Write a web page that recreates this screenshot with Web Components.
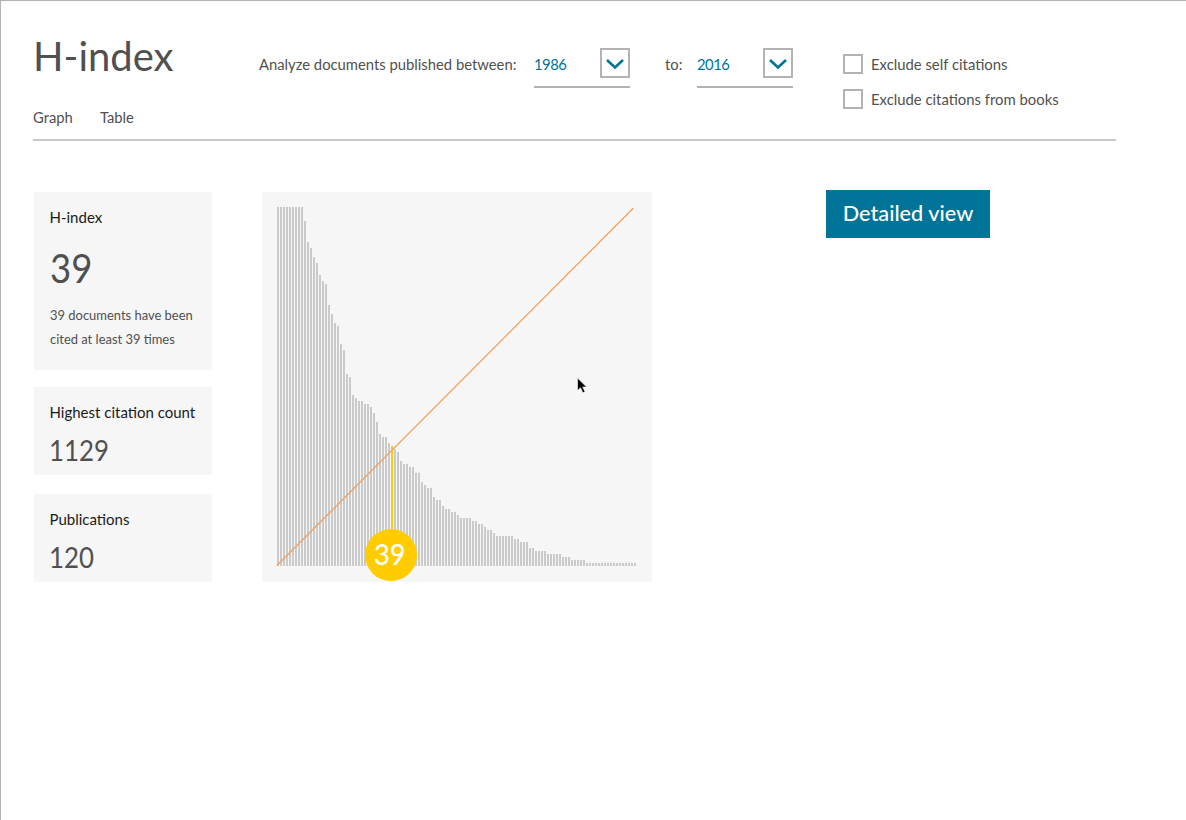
<!DOCTYPE html>
<html lang="en"><head><meta charset="utf-8"><title>H-index</title>
<style>html,body{margin:0;padding:0;background:#fff}</style></head>
<body>
<hindex-page>
  <page-header>
    <span slot="title">H-index</span>
    <tab-link slot="tabs">Graph</tab-link>
    <tab-link slot="tabs">Table</tab-link>
    <span slot="range-label">Analyze documents published between:</span>
    <year-select slot="from" value="1986"></year-select>
    <span slot="to-label">to:</span>
    <year-select slot="to" value="2016"></year-select>
    <check-option slot="checks">Exclude self citations</check-option>
    <check-option slot="checks">Exclude citations from books</check-option>
  </page-header>
  <page-main>
    <stat-card slot="cards" class="first" label="H-index" value="39" big>39 documents have been<br>cited at least 39 times</stat-card>
    <stat-card slot="cards" class="second" label="Highest citation count" value="1129"></stat-card>
    <stat-card slot="cards" class="third" label="Publications" value="120"></stat-card>
    <hindex-chart slot="chart"></hindex-chart>
    <detail-button slot="action">Detailed view</detail-button>
  </page-main>
  <mouse-cursor></mouse-cursor>
</hindex-page>
<script>
const FONT='"Lato","Noto Sans",sans-serif';
function def(name,html){
  customElements.define(name,class extends HTMLElement{
    constructor(){super();const r=this.attachShadow({mode:'open'});r.innerHTML=typeof html==='function'?html(this):html;}
  });
}
def('hindex-page',`<style>
:host{display:block;position:relative;box-sizing:border-box;width:1186px;height:820px;overflow:hidden;
border-left:1px solid #b3b3b3;border-top:1px solid #b3b3b3;padding-left:32px;background:#fff;font-family:${FONT};color:#505050}
</style><slot></slot>`);
def('page-header',`<style>
:host{display:flex;box-sizing:border-box;width:1083px;height:140px;border-bottom:2px solid #c9c9c9}
.left{width:226px;flex:none}
.title{font-size:40px;line-height:48px;margin-top:31px;color:#505050}
.tabs{display:flex;gap:27px;margin-top:27px}
.range{display:flex;align-items:flex-start;margin-top:47px;font-size:14.8px;line-height:32px;height:40px}
.lbl{width:275px;flex:none;white-space:nowrap}
.tol{width:32px;flex:none;margin-left:35px}
.checks{margin-left:50px;margin-top:53px;display:flex;flex-direction:column;gap:15px}
</style>
<div class="left"><div class="title"><slot name="title"></slot></div><div class="tabs"><slot name="tabs"></slot></div></div>
<div class="range"><span class="lbl"><slot name="range-label"></slot></span><slot name="from"></slot><span class="tol"><slot name="to-label"></slot></span><slot name="to"></slot></div>
<div class="checks"><slot name="checks"></slot></div>`);
def('tab-link',`<style>:host{display:block;font-size:14.8px;line-height:20px;color:#505050}</style><slot></slot>`);
def('year-select',el=>`<style>
:host{display:flex;box-sizing:border-box;width:96px;height:40px;border-bottom:2px solid #b3b3b3;justify-content:space-between;font-size:14.8px;line-height:32px;color:#007398}
.y{letter-spacing:-.5px}
.box{box-sizing:border-box;width:30px;height:30px;border:2px solid #b3b3b3;display:flex;align-items:center;justify-content:center}
</style><span class="y">${el.getAttribute('value')}</span><span class="box"><svg width="20" height="16" viewBox="0 0 20 16"><path d="M2 5 L10 12.5 L18 5" fill="none" stroke="#007398" stroke-width="2.6"/></svg></span>`);
def('check-option',`<style>
:host{display:flex;align-items:center;gap:8px;height:20px;font-size:14.85px;color:#505050;white-space:nowrap}
.b{box-sizing:border-box;width:20px;height:20px;border:2px solid #b3b3b3;flex:none}
</style><span class="b"></span><span><slot></slot></span>`);
def('page-main',`<style>
:host{display:flex;align-items:flex-start;margin-top:51px;margin-left:1px}
.cards{width:178px;flex:none}
.chart{margin-left:50px;flex:none;height:390px}
.action{margin-left:174px;margin-top:-2px;flex:none}
</style><div class="cards"><slot name="cards"></slot></div><div class="chart"><slot name="chart"></slot></div><div class="action"><slot name="action"></slot></div>`);
def('stat-card',el=>{
  const big=el.hasAttribute('big');
  return `<style>
:host{display:block;box-sizing:border-box;background:#f6f6f6;padding:15px 0 0 15.5px;height:${big?178:88}px;color:#505050}
:host(.second){margin-top:17px}
:host(.third){margin-top:19px}
.l{font-size:15px;line-height:20px;color:#1a1a1a;white-space:nowrap}
.v{font-size:${big?41:29}px;line-height:${big?48:36}px;margin-top:${big?17:10}px;margin-left:${big?0:-.5}px;color:#505050;transform:scaleX(.89);transform-origin:0 50%}
.n{font-size:12.95px;line-height:24px;margin-top:11px;margin-left:.5px}
</style><div class="l">${el.getAttribute('label')}</div><div class="v">${el.getAttribute('value')}</div>${big?'<div class="n"><slot></slot></div>':''}`;
});
def('hindex-chart',()=>{
  const runs=[[9,207],[1,221],[1,242],[1,248],[1,257],[1,263],[1,275],[1,281],[1,284],[1,305],[1,314],[1,323],[1,326],[1,344],[1,350],[1,374],[1,377],
  [1,395],[1,398],[2,401],[2,404],[1,407],[1,413],[1,422],[1,434],[2,437],[1,443],[1,446],[1,449],[1,452],[1,461],[2,464],[2,467],[2,473],[1,482],[1,485],[2,488],[1,497],[2,500],[1,506],[2,509],[2,512],[1,515],
  [4,518],[2,521],[2,524],[1,527],[2,530],[1,533],[6,536],[2,539],[3,542],[2,548],[4,551],[5,554],[3,557],[5,560],[17,563]];
  let i=0,rects='';
  for(const [n,t] of runs)for(let k=0;k<n;k++,i++){
    rects+=`<rect x="${15+3*i}" y="${t-192}" width="2" height="${566-t}" fill="#cacaca"/>`;
  }
  return `<style>
:host{display:block;position:relative;width:390px;height:390px;background:#f6f6f6}
svg{display:block}
.badge{position:absolute;left:103px;top:337px;width:52px;height:52px;border-radius:50%;background:#ffcc00;color:#fff;display:flex;align-items:center;justify-content:center;font-size:29px;font-weight:500;line-height:1;padding:0 2px 4px 0;box-sizing:border-box}
.badge span{display:block;transform:scaleX(.94)}
</style><svg width="390" height="390" viewBox="0 0 390 390">${rects}
<rect x="129" y="254" width="2" height="86" fill="#ffcc00"/>
<line x1="15" y1="373.5" x2="371.5" y2="16" stroke="#f0a060" stroke-width="1.3"/></svg><div class="badge"><span>39</span></div>`;
});
def('detail-button',`<style>
:host{display:flex;align-items:center;justify-content:center;width:164px;height:48px;box-sizing:border-box;padding-bottom:2px;background:#007398;color:#fff;font-size:21.7px;font-weight:500;white-space:nowrap}
</style><slot></slot>`);
def('mouse-cursor',`<style>:host{position:absolute;left:575px;top:376px;display:block;width:14px;height:18px}svg{display:block}</style>
<svg width="14" height="18" viewBox="0 0 14 18"><path d="M1.5 1 L1.5 13.5 L4.5 10.8 L6.8 15.8 L9 14.8 L6.8 10 L10.6 10 Z" fill="#000" stroke="#fff" stroke-width=".6"/></svg>`);
</script>
</body></html>
